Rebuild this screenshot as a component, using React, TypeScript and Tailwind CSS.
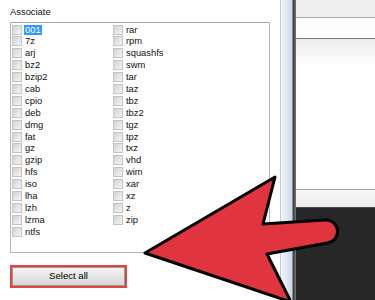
const leftItems = ['001', '7z', 'arj', 'bz2', 'bzip2', 'cab', 'cpio', 'deb', 'dmg', 'fat', 'gz', 'gzip', 'hfs', 'iso', 'lha', 'lzh', 'lzma', 'ntfs'];
const rightItems = ['rar', 'rpm', 'squashfs', 'swm', 'tar', 'taz', 'tbz', 'tbz2', 'tgz', 'tpz', 'txz', 'vhd', 'wim', 'xar', 'xz', 'z', 'zip'];

interface RowProps {
  label: string;
  selected?: boolean;
}

const Row = ({ label, selected }: RowProps) => (
  <div className="flex items-center h-[11.9px]">
    <span className="ml-[1px] w-[10px] h-[10px] shrink-0 border border-[#c4c4c4] bg-gradient-to-br from-[#d2d2d2] to-[#f6f6f6]" />
    <span
      className={
        selected
          ? 'ml-[2px] px-[1px] h-[10px] leading-[10px] bg-[#3399ff] text-white'
          : 'ml-[2px] px-[1px] h-[10px] leading-[10px] text-[#111]'
      }
    >
      {label}
    </span>
  </div>
);

const App = () => {
  return (
    <div
      className="relative w-[375px] h-[300px] overflow-hidden bg-white flex"
      style={{ fontFamily: '"Liberation Sans", Arial, sans-serif' }}
    >
      {/* dialog */}
      <div className="w-[280px] shrink-0 pl-[10px] pt-[6px] flex flex-col">
        <div className="h-[11px] leading-[11px] text-[9.4px] text-[#111]">Associate</div>
        <div className="mt-[5px] w-[260px] h-[231px] border border-[#b7b7b7] border-t-[#a8a8a8] flex pt-[0.6px] text-[9.4px]">
          <div className="w-[101px] flex flex-col">
            {leftItems.map((item, i) => (
              <Row key={item} label={item} selected={i === 0} />
            ))}
          </div>
          <div className="w-[101px] flex flex-col">
            {rightItems.map((item) => (
              <Row key={item} label={item} />
            ))}
          </div>
        </div>
        <div className="mt-[12px] w-[117px] h-[23px] border-2 border-[#e2443f]">
          <div className="w-full h-full border border-[#9a9a9a] bg-gradient-to-b from-[#f4f4f4] to-[#d8d8d8] flex items-center justify-center text-[9.6px] text-black">
            Select all
          </div>
        </div>
      </div>

      {/* window edge */}
      <div className="w-[16px] shrink-0 flex">
        <div className="w-[1px] bg-[#c4ccd4]" />
        <div className="w-[11px] bg-gradient-to-r from-[#f1f5f9] via-[#e2eaf3] to-[#c9d6e4]" />
        <div className="w-[1px] bg-[#8a929c]" />
        <div className="w-[3px] bg-gradient-to-r from-[#353535] to-[#7a7a7a]" />
      </div>

      {/* next window */}
      <div className="flex-1 flex flex-col">
        <div className="h-[17px] bg-[#efefef]" />
        <div className="h-[1px] bg-[#a9a9a9]" />
        <div className="h-[20px] bg-[#fdfdfd]" />
        <div className="h-[1px] bg-[#7c7c7c]" />
        <div className="h-[26px] bg-gradient-to-b from-[#ececec] to-white" />
        <div className="flex-1 bg-white" />
        <div className="h-[1px] bg-[#a3a3a3]" />
        <div className="h-[17px] bg-gradient-to-b from-[#f7f7f7] to-[#ececec]" />
        <div className="h-[1px] bg-[#4a4a4a]" />
        <div className="h-[92px] bg-[#272727]" />
      </div>

      {/* arrow */}
      <svg className="absolute left-0 top-0 pointer-events-none" width="375" height="300" viewBox="0 0 375 300">
        <path
          d="M145,253 L275,177 L263,224 L325,220 A11.5,11.5 0 0 1 327,243 L267,254 L291,302 Z"
          fill="#e0343f"
          stroke="#000"
          strokeWidth="3"
          strokeLinejoin="round"
        />
      </svg>
    </div>
  );
};

export default App;
